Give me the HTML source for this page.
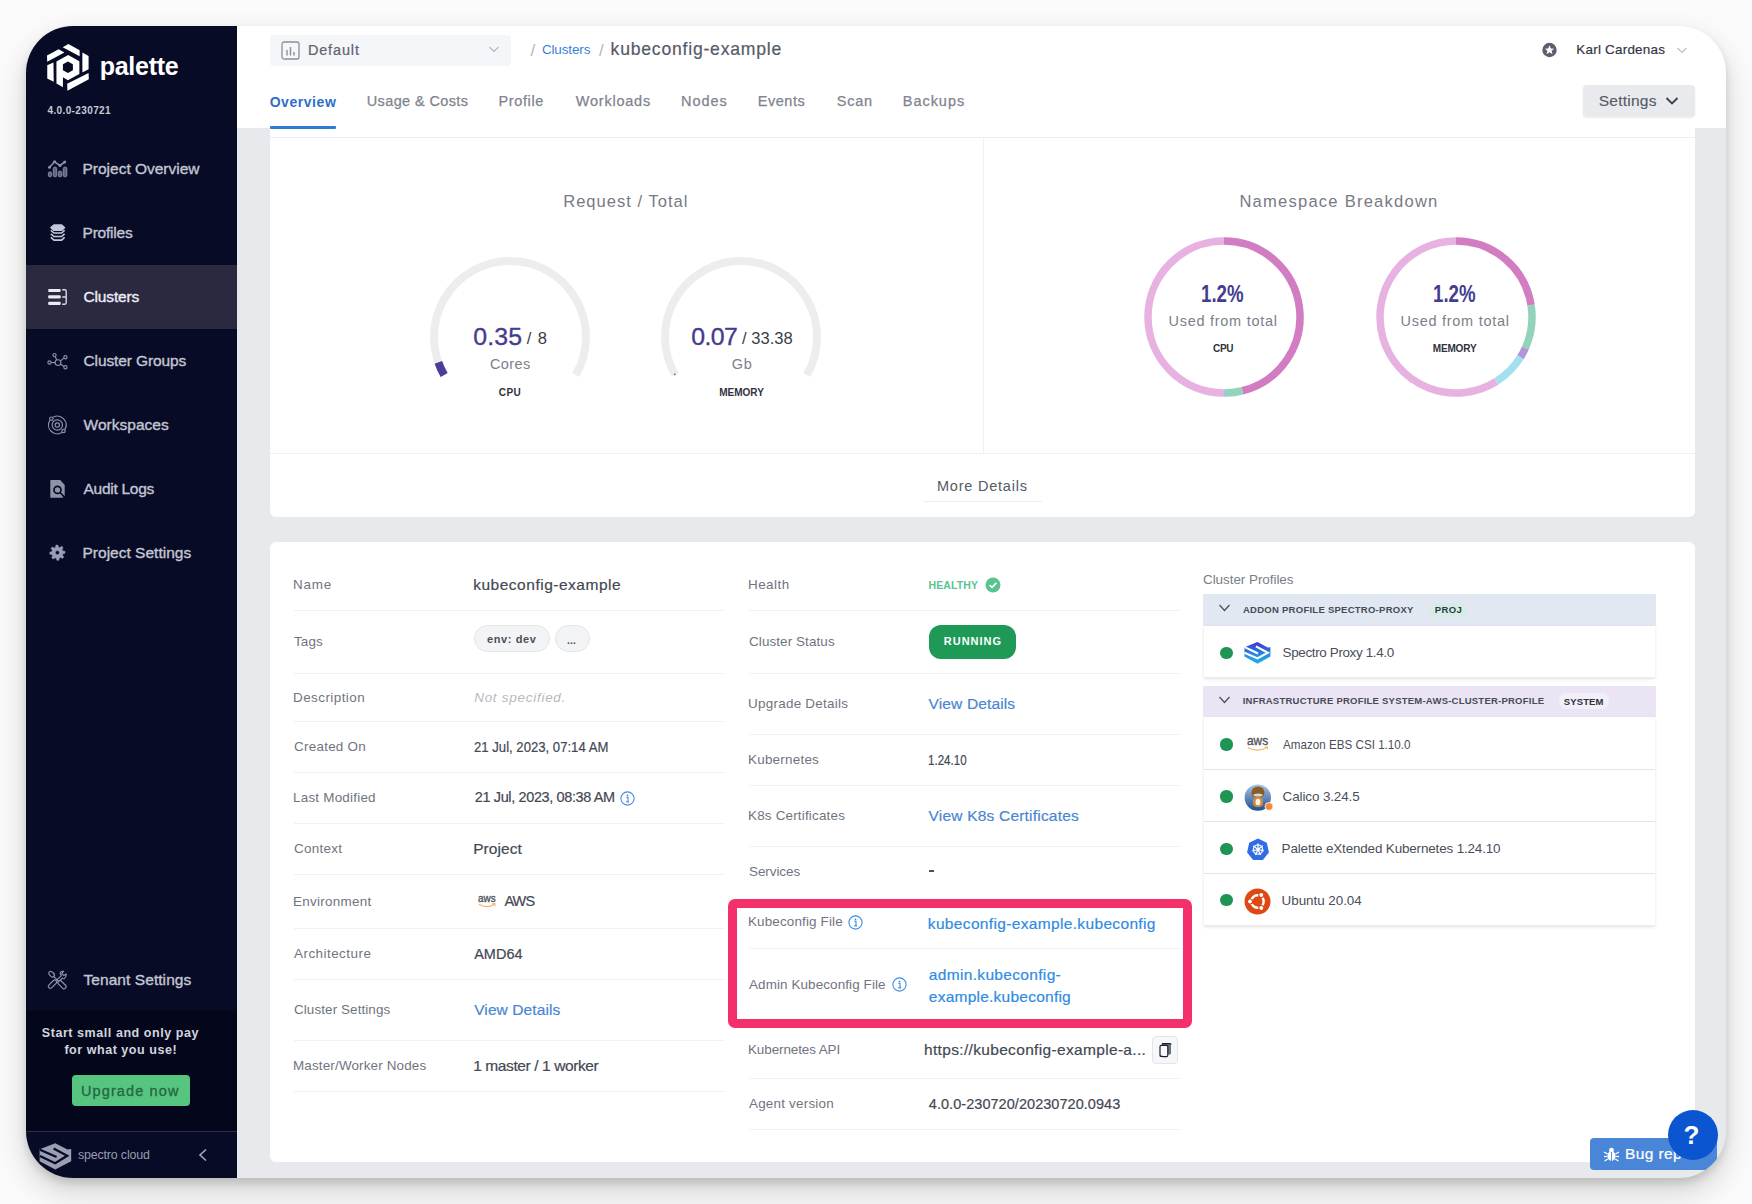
<!DOCTYPE html>
<html><head><meta charset="utf-8"><style>
html,body{margin:0;padding:0;}
body{width:1752px;height:1204px;position:relative;overflow:hidden;background:#fbfbfb;font-family:"Liberation Sans",sans-serif;}
svg{position:absolute;overflow:visible;}
</style></head><body>
<div style="position:absolute;left:26px;top:26px;width:1700px;height:1152px;border-radius:47px;background:#e8e9ec;box-shadow:0 14px 32px rgba(0,0,0,0.17),0 5px 8px rgba(0,0,0,0.13);overflow:hidden;"><div style="position:absolute;left:0;top:0;width:211px;height:1152px;background:#070b26;"></div><div style="position:absolute;left:0;top:239px;width:211px;height:64px;background:#2a2940;"></div><div style="position:absolute;left:0;top:985px;width:211px;height:120px;background:#04071c;"></div><div style="position:absolute;left:0;top:1105px;width:211px;height:1px;background:#2a2d45;"></div><div style="position:absolute;left:211px;top:0;width:1489px;height:102px;background:#ffffff;"></div><div style="position:absolute;left:1564px;top:1112px;width:127px;height:32px;background:#4a86d8;border-radius:4px;z-index:9;"></div><div style="position:absolute;left:1642px;top:1084px;width:50px;height:50px;border-radius:50%;background:#0b55d0;z-index:11;"></div></div>
<div style="position:absolute;left:270px;top:34.5px;width:241px;height:31.0px;background:#f4f6f9;border-radius:3px;"></div>
<div style="position:absolute;left:270px;top:126px;width:65.5px;height:2.5px;background:#2f7ad6;border-radius:1px;z-index:3;"></div>
<div style="position:absolute;left:270px;top:127px;width:1425px;height:390px;background:#ffffff;border-radius:0 0 6px 6px;"></div>
<div style="position:absolute;left:270px;top:137px;width:1425px;height:1px;background:#eceef1;"></div>
<div style="position:absolute;left:983px;top:138px;width:1px;height:315px;background:#eff0f2;"></div>
<div style="position:absolute;left:270px;top:453px;width:1425px;height:1px;background:#eef0f2;"></div>
<div style="position:absolute;left:923px;top:501px;width:119px;height:1px;background:#eceef0;"></div>
<div style="position:absolute;left:1583px;top:85px;width:112px;height:32px;background:#e9eaee;border-radius:4px;box-shadow:0 1px 2px rgba(0,0,0,0.08);"></div>
<div style="position:absolute;left:270px;top:542px;width:1425px;height:620px;background:#ffffff;border-radius:6px;"></div>
<div style="position:absolute;left:71.6px;top:1075.1px;width:118.20000000000002px;height:31.40000000000009px;background:#55c57f;border-radius:4px;"></div>
<div style="position:absolute;left:294px;top:610px;width:430px;height:1px;background:#f0f1f3;"></div>
<div style="position:absolute;left:294px;top:673px;width:430px;height:1px;background:#f0f1f3;"></div>
<div style="position:absolute;left:294px;top:721px;width:430px;height:1px;background:#f0f1f3;"></div>
<div style="position:absolute;left:294px;top:772px;width:430px;height:1px;background:#f0f1f3;"></div>
<div style="position:absolute;left:294px;top:823px;width:430px;height:1px;background:#f0f1f3;"></div>
<div style="position:absolute;left:294px;top:874px;width:430px;height:1px;background:#f0f1f3;"></div>
<div style="position:absolute;left:294px;top:928px;width:430px;height:1px;background:#f0f1f3;"></div>
<div style="position:absolute;left:294px;top:979px;width:430px;height:1px;background:#f0f1f3;"></div>
<div style="position:absolute;left:294px;top:1040px;width:430px;height:1px;background:#f0f1f3;"></div>
<div style="position:absolute;left:294px;top:1091px;width:430px;height:1px;background:#f0f1f3;"></div>
<div style="position:absolute;left:474px;top:625px;width:76px;height:27px;background:#f3f4f6;border:1px solid #e2e4e8;border-radius:14px;box-sizing:border-box;"></div>
<div style="position:absolute;left:555px;top:625px;width:35px;height:27px;background:#f3f4f6;border:1px solid #e2e4e8;border-radius:14px;box-sizing:border-box;"></div>
<div style="position:absolute;left:749px;top:610px;width:431px;height:1px;background:#f0f1f3;"></div>
<div style="position:absolute;left:749px;top:673px;width:431px;height:1px;background:#f0f1f3;"></div>
<div style="position:absolute;left:749px;top:734px;width:431px;height:1px;background:#f0f1f3;"></div>
<div style="position:absolute;left:749px;top:785px;width:431px;height:1px;background:#f0f1f3;"></div>
<div style="position:absolute;left:749px;top:846px;width:431px;height:1px;background:#f0f1f3;"></div>
<div style="position:absolute;left:749px;top:948px;width:431px;height:1px;background:#f0f1f3;"></div>
<div style="position:absolute;left:749px;top:1078px;width:431px;height:1px;background:#f0f1f3;"></div>
<div style="position:absolute;left:749px;top:1129px;width:431px;height:1px;background:#f0f1f3;"></div>
<div style="position:absolute;left:928.6px;top:625.3px;width:87.79999999999995px;height:33.30000000000007px;background:#1e9a56;border-radius:12px;"></div>
<div style="position:absolute;left:928.6px;top:870.4px;width:5.7999999999999545px;height:1.5px;background:#4a4e5a;"></div>
<div style="position:absolute;left:1152.3px;top:1036px;width:25.700000000000045px;height:27.59999999999991px;background:#f6f7f9;border:1px solid #e3e5e9;border-radius:4px;box-sizing:border-box;"></div>
<div style="position:absolute;left:727.7px;top:899.2px;width:464.0999999999999px;height:128.5px;border:9.5px solid #f3306a;border-radius:7px;box-sizing:border-box;z-index:8;"></div>
<div style="position:absolute;left:1203px;top:594px;width:453px;height:31.5px;background:#e2e8f1;"></div>
<div style="position:absolute;left:1204px;top:625.5px;width:451px;height:52.5px;background:#ffffff;box-shadow:0 1px 3px rgba(0,0,0,0.12);border-bottom:1.5px solid #e9eaee;box-sizing:border-box;"></div>
<div style="position:absolute;left:1429px;top:602.6px;width:37.700000000000045px;height:14.399999999999977px;background:#d5ede6;border-radius:7px;"></div>
<div style="position:absolute;left:1203px;top:686px;width:453px;height:31px;background:#ebe4f4;"></div>
<div style="position:absolute;left:1558.5px;top:693px;width:50.90000000000009px;height:16px;background:#f3eff9;border-radius:7px;"></div>
<div style="position:absolute;left:1204px;top:717px;width:451px;height:53px;background:#ffffff;box-shadow:0 1px 3px rgba(0,0,0,0.12);border-bottom:1.5px solid #e9eaee;box-sizing:border-box;"></div>
<div style="position:absolute;left:1204px;top:770px;width:451px;height:52px;background:#ffffff;box-shadow:0 1px 3px rgba(0,0,0,0.12);border-bottom:1.5px solid #e9eaee;box-sizing:border-box;"></div>
<div style="position:absolute;left:1204px;top:822px;width:451px;height:52px;background:#ffffff;box-shadow:0 1px 3px rgba(0,0,0,0.12);border-bottom:1.5px solid #e9eaee;box-sizing:border-box;"></div>
<div style="position:absolute;left:1204px;top:874px;width:451px;height:52px;background:#ffffff;box-shadow:0 1px 3px rgba(0,0,0,0.12);border-bottom:1.5px solid #e9eaee;box-sizing:border-box;"></div>
<div style="position:absolute;left:1220.4px;top:646.6px;width:12.2px;height:12.2px;border-radius:50%;background:#1f9555;z-index:6;"></div>
<div style="position:absolute;left:1220.4px;top:738.4px;width:12.2px;height:12.2px;border-radius:50%;background:#1f9555;z-index:6;"></div>
<div style="position:absolute;left:1220.4px;top:790.4px;width:12.2px;height:12.2px;border-radius:50%;background:#1f9555;z-index:6;"></div>
<div style="position:absolute;left:1220.4px;top:842.7px;width:12.2px;height:12.2px;border-radius:50%;background:#1f9555;z-index:6;"></div>
<div style="position:absolute;left:1220.4px;top:894.3px;width:12.2px;height:12.2px;border-radius:50%;background:#1f9555;z-index:6;"></div>
<svg style="left:40px;top:38px;z-index:6;" width="60" height="60" viewBox="0 0 1204 1204"><g fill="#ffffff"><polygon points="140,350 375,228 490,290 145,475"/><polygon points="455,185 570,120 795,245 795,365"/><polygon points="850,290 975,362 975,625 850,690"/><polygon points="545,920 975,700 980,830 550,1060"/><polygon points="145,545 270,490 275,880 145,815"/><path fill-rule="evenodd" d="M330,470 L565,340 L790,465 L790,720 L560,850 L460,790 L460,990 L330,915 Z M560,470 L660,525 L660,645 L560,700 L460,645 L460,525 Z"/></g></svg>
<svg style="left:44px;top:155px;z-index:6;" width="28" height="28" viewBox="0 0 28 28"><g fill="#5f6482" stroke="#8d91a9" stroke-width="0.9"><rect x="4.4" y="16.9" width="3.2" height="4.9" rx="1.4"/><rect x="9.3" y="12.1" width="3.4" height="9.7" rx="1.5"/><rect x="14.4" y="16.1" width="3.4" height="5.7" rx="1.5"/><rect x="19.3" y="12.1" width="3.5" height="9.7" rx="1.5"/></g><polyline points="5.5,12.2 10.6,6.8 16,10.5 20.7,7" fill="none" stroke="#8d91a9" stroke-width="1.6" stroke-linejoin="round" stroke-linecap="round"/><g fill="#8d91a9"><circle cx="5.5" cy="12.2" r="1.5"/><circle cx="10.6" cy="6.8" r="1.5"/><circle cx="16" cy="10.5" r="1.5"/><circle cx="20.7" cy="7" r="1.5"/></g></svg>
<svg style="left:44px;top:219px;z-index:6;" width="28" height="28" viewBox="0 0 28 28"><g stroke="#c4c7dc" stroke-width="1.6" fill="none" stroke-linejoin="round"><polygon points="7,8.6 10,6 17.6,6 20.4,8.6 17.6,11.3 10,11.3" fill="#c4c7dc"/><polyline points="6.8,11.4 10,14 17.6,14 20.6,11.4"/><polyline points="6.8,14.8 10,17.5 17.6,17.5 20.6,14.8"/><polyline points="6.8,18.3 10,21.1 17.6,21.1 20.6,18.3"/></g></svg>
<svg style="left:44px;top:283px;z-index:6;" width="28" height="28" viewBox="0 0 28 28"><g fill="#e9eaf3"><rect x="4.2" y="6" width="12.5" height="3.1" rx="1"/><rect x="4.2" y="12.3" width="12.5" height="3.2" rx="1"/><rect x="4.2" y="18.8" width="12.5" height="3.1" rx="1"/></g><path d="M18.2,6.8 H20.8 Q22.2,6.8 22.2,8.2 V19.8 Q22.2,21.2 20.8,21.2 H18.2 M18.2,14 H22.2" fill="none" stroke="#d6d8e6" stroke-width="1.4"/></svg>
<svg style="left:44px;top:347px;z-index:6;" width="28" height="28" viewBox="0 0 28 28"><g fill="none" stroke="#8d91a9" stroke-width="1.15"><circle cx="14" cy="15.6" r="2.9"/><circle cx="10.5" cy="8.1" r="1.6"/><circle cx="21.4" cy="10.2" r="1.6"/><circle cx="5.5" cy="15.5" r="1.6"/><circle cx="21.4" cy="20.2" r="1.6"/><line x1="11.2" y1="9.6" x2="12.7" y2="13"/><line x1="19.9" y1="11.1" x2="16.6" y2="13.9"/><line x1="7.1" y1="15.5" x2="11.1" y2="15.6"/><line x1="20" y1="19.3" x2="16.5" y2="17.2"/></g></svg>
<svg style="left:44px;top:411px;z-index:6;" width="28" height="28" viewBox="0 0 28 28"><g fill="none" stroke="#8d91a9" stroke-width="1.2"><path d="M9.17,6.23 A8.8,8.8 0 0 1 20.92,18.40"/><path d="M17.96,21.46 A8.8,8.8 0 0 1 5.84,9.34"/><circle cx="13.3" cy="14" r="5.2"/><circle cx="13.3" cy="14" r="2.2"/><circle cx="7.4" cy="7.7" r="1.7"/><circle cx="19.5" cy="20" r="1.7"/></g></svg>
<svg style="left:44px;top:475px;z-index:6;" width="28" height="28" viewBox="0 0 28 28"><path d="M6.8,5.1 H16.2 L20.7,9.9 V20.6 L18.6,22.8 H6.3 V5.6 Z" fill="#8f93a8"/><circle cx="13.5" cy="14.9" r="3.5" fill="none" stroke="#060a25" stroke-width="1.7"/><line x1="16" y1="17.5" x2="20.8" y2="22.3" stroke="#060a25" stroke-width="1.7"/></svg>
<svg style="left:44px;top:539px;z-index:6;" width="28" height="28" viewBox="0 0 28 28"><path fill-rule="evenodd" fill="#9a9eb6" stroke="#9a9eb6" stroke-width="0.6" stroke-linejoin="round" d="M20.85,12.19 L20.98,13.18 L20.99,14.17 L18.90,14.77 L18.71,15.48 L18.43,16.16 L19.73,17.90 L19.13,18.69 L18.43,19.40 L16.53,18.34 L15.90,18.71 L15.22,19.00 L14.91,21.15 L13.92,21.28 L12.93,21.29 L12.33,19.20 L11.62,19.01 L10.94,18.73 L9.20,20.03 L8.41,19.43 L7.70,18.73 L8.76,16.83 L8.39,16.20 L8.10,15.52 L5.95,15.21 L5.82,14.22 L5.81,13.23 L7.90,12.63 L8.09,11.92 L8.37,11.24 L7.07,9.50 L7.67,8.71 L8.37,8.00 L10.27,9.06 L10.90,8.69 L11.58,8.40 L11.89,6.25 L12.88,6.12 L13.87,6.11 L14.47,8.20 L15.18,8.39 L15.86,8.67 L17.60,7.37 L18.39,7.97 L19.10,8.67 L18.04,10.57 L18.41,11.20 L18.70,11.88 Z M15.5,13.7 A2.1,2.1 0 1 0 11.3,13.7 A2.1,2.1 0 1 0 15.5,13.7 Z"/></svg>
<svg style="left:44px;top:966px;z-index:6;" width="28" height="28" viewBox="0 0 28 28"><g fill="none" stroke="#8d91a9" stroke-width="1.2" stroke-linejoin="round"><ellipse cx="7.6" cy="8.2" rx="3.3" ry="2.1" transform="rotate(45 7.6 8.2)"/><line x1="10.1" y1="10.9" x2="14.6" y2="15.3"/><rect x="13.2" y="16.6" width="9.6" height="4.2" rx="1.6" transform="rotate(45 18 18.7)"/><rect x="3.6" y="16.3" width="9.8" height="3.8" rx="1.6" transform="rotate(-45 8.5 18.2)"/><path d="M12.2,14.4 L17.4,9.6 Q15.2,7.2 17.1,5.6 Q18.6,5 19.6,5.4 L17.8,7.6 L19.9,9.6 L22.2,8 Q22.8,10.6 20.6,12.4 Q19.2,13.2 18.3,12.2 L13.4,16.6"/></g></svg>
<svg style="left:30px;top:1135px;z-index:6;" width="50" height="40" viewBox="0 0 1505 1204"><polygon points="760,250 1130,440 1240,425 1240,790 760,1040 290,790 290,430" fill="#9b9eb2"/><g stroke="#060a25" stroke-width="68" fill="none" stroke-linejoin="miter"><line x1="300" y1="445" x2="800" y2="660"/><polyline points="710,410 1120,625 755,850 300,630"/></g></svg>
<svg style="left:196px;top:1147px;z-index:6;" width="14" height="16" viewBox="0 0 14 16"><polyline points="10,2.5 4,8 10,13.5" fill="none" stroke="#a7aabb" stroke-width="1.6"/></svg>
<svg style="left:281px;top:41px;z-index:6;" width="19" height="19" viewBox="0 0 19 19"><rect x="1" y="1" width="17" height="17" rx="2" fill="none" stroke="#8a8f99" stroke-width="1.3"/><g stroke="#8a8f99" stroke-width="1.4"><line x1="6" y1="9" x2="6" y2="14.5"/><line x1="9.5" y1="6" x2="9.5" y2="14.5"/><line x1="13" y1="11" x2="13" y2="14.5"/></g></svg>
<svg style="left:488px;top:44px;z-index:6;" width="12" height="10" viewBox="0 0 12 10"><polyline points="1.5,3 6,7.5 10.5,3" fill="none" stroke="#b3b7bf" stroke-width="1.1"/></svg>
<svg style="left:1541px;top:42px;z-index:6;" width="17" height="16" viewBox="0 0 17 16"><circle cx="8.5" cy="8" r="7.2" fill="#5d5d70"/><polygon fill="#ffffff" points="8.5,3.3 9.8,6.6 13.2,6.7 10.6,8.8 11.5,12.2 8.5,10.3 5.5,12.2 6.4,8.8 3.8,6.7 7.2,6.6"/></svg>
<svg style="left:1676px;top:45px;z-index:6;" width="12" height="10" viewBox="0 0 12 10"><polyline points="1.5,3 6,7.5 10.5,3" fill="none" stroke="#b9bcc4" stroke-width="1.1"/></svg>
<svg style="left:1664px;top:94px;z-index:6;" width="16" height="14" viewBox="0 0 16 14"><polyline points="2.5,4 8,9.5 13.5,4" fill="none" stroke="#3d414c" stroke-width="1.9"/></svg>
<svg style="left:620px;top:790.5px;z-index:6;" width="15" height="15" viewBox="0 0 15 15"><circle cx="7.5" cy="7.5" r="6.6" fill="none" stroke="#4a8ad8" stroke-width="1.1"/><circle cx="7.5" cy="4.4" r="0.9" fill="#4a8ad8"/><path d="M6.3,6.3 H8 V10.8 M6.2,10.9 H9" fill="none" stroke="#4a8ad8" stroke-width="1.1"/></svg>
<svg style="left:847.5px;top:914.5px;z-index:6;" width="15" height="15" viewBox="0 0 15 15"><circle cx="7.5" cy="7.5" r="6.6" fill="none" stroke="#3b8ee0" stroke-width="1.1"/><circle cx="7.5" cy="4.4" r="0.9" fill="#3b8ee0"/><path d="M6.3,6.3 H8 V10.8 M6.2,10.9 H9" fill="none" stroke="#3b8ee0" stroke-width="1.1"/></svg>
<svg style="left:891.6px;top:976.8px;z-index:6;" width="15" height="15" viewBox="0 0 15 15"><circle cx="7.5" cy="7.5" r="6.6" fill="none" stroke="#3b8ee0" stroke-width="1.1"/><circle cx="7.5" cy="4.4" r="0.9" fill="#3b8ee0"/><path d="M6.3,6.3 H8 V10.8 M6.2,10.9 H9" fill="none" stroke="#3b8ee0" stroke-width="1.1"/></svg>
<svg style="left:985px;top:577px;z-index:6;" width="16" height="16" viewBox="0 0 16 16"><circle cx="8" cy="8" r="7.5" fill="#5ac48f"/><polyline points="4.6,8.2 7,10.4 11.4,5.8" fill="none" stroke="#fff" stroke-width="1.7"/></svg>
<svg style="left:477px;top:893.6px;z-index:6;" width="21.7" height="15.799999999999955" viewBox="0 0 21.7 15.799999999999955"><text x="1" y="8.00" font-family="Liberation Sans" font-size="11.56" fill="#4f5259" textLength="17.70" lengthAdjust="spacingAndGlyphs" stroke="#4f5259" stroke-width="0.35">aws</text><path d="M1.8,10.20 Q9.85,15.00 17.20,10.20" fill="none" stroke="#f1b46a" stroke-width="1.2"/><path d="M15.10,9.80 L18.30,9.60 L17.70,12.20" fill="none" stroke="#f2a84e" stroke-width="0.9"/></svg>
<svg style="left:1245.7px;top:736px;z-index:6;" width="25.2" height="17.700000000000045" viewBox="0 0 25.2 17.700000000000045"><text x="1" y="9.00" font-family="Liberation Sans" font-size="13.49" fill="#4f5259" textLength="21.20" lengthAdjust="spacingAndGlyphs" stroke="#4f5259" stroke-width="0.35">aws</text><path d="M1.8,11.50 Q11.60,16.90 20.70,11.50" fill="none" stroke="#f1b46a" stroke-width="1.2"/><path d="M18.60,11.10 L21.80,10.90 L21.20,13.50" fill="none" stroke="#f2a84e" stroke-width="0.9"/></svg>
<svg style="left:1157px;top:1041px;z-index:6;" width="16" height="18" viewBox="0 0 16 18"><rect x="4.6" y="2.3" width="9.4" height="11.2" rx="1.2" fill="#6e727d"/><path d="M5,2.6 H13.2 Q14,2.6 14,3.6" fill="none" stroke="#1c2030" stroke-width="1.2"/><rect x="3" y="4.3" width="7.8" height="11.2" rx="1.3" fill="#f7f8fa" stroke="#1c2030" stroke-width="1.2"/><path d="M3.6,14.8 Q4.5,15.6 6,15.6 H10" fill="none" stroke="#1c2030" stroke-width="1.4"/></svg>
<svg style="left:1218px;top:603px;z-index:6;" width="13" height="10" viewBox="0 0 13 10"><polyline points="1.5,2 6.5,7.5 11.5,2" fill="none" stroke="#4a4e5a" stroke-width="1.2"/></svg>
<svg style="left:1218px;top:695px;z-index:6;" width="13" height="10" viewBox="0 0 13 10"><polyline points="1.5,2 6.5,7.5 11.5,2" fill="none" stroke="#4a4e5a" stroke-width="1.2"/></svg>
<svg style="left:1240px;top:638px;z-index:6;" width="36" height="30" viewBox="0 0 1445 1204"><defs><linearGradient id="sp" x1="0" y1="0" x2="0" y2="1"><stop offset="0" stop-color="#4030d0"/><stop offset="0.5" stop-color="#2a7fe0"/><stop offset="1" stop-color="#1db6e6"/></linearGradient></defs><polygon points="700,160 1110,385 1220,370 1220,740 700,1030 180,740 180,370" fill="url(#sp)"/><g stroke="#ffffff" stroke-width="85" fill="none"><line x1="190" y1="365" x2="720" y2="620"/><polyline points="640,335 1120,590 700,820 180,590"/></g></svg>
<svg style="left:1243.5px;top:782.5px;z-index:6;" width="30" height="29" viewBox="0 0 30 29"><defs><linearGradient id="cb" x1="0" y1="0" x2="0" y2="1"><stop offset="0" stop-color="#a9c4e4"/><stop offset="1" stop-color="#1f4f8f"/></linearGradient></defs><circle cx="13.8" cy="14.6" r="13.2" fill="url(#cb)"/><ellipse cx="14" cy="9.5" rx="6.5" ry="6" fill="#8a5a2a"/><ellipse cx="14" cy="12" rx="4.6" ry="1.6" fill="#d8d8c8"/><rect x="9" y="14" width="10" height="10" rx="4" fill="#d08a45"/><ellipse cx="14" cy="19" rx="2.4" ry="3.3" fill="#fff6e0"/><circle cx="25" cy="23.5" r="4" fill="#f08a3a" stroke="#fff" stroke-width="0.8"/></svg>
<svg style="left:1245.5px;top:837.5px;z-index:6;" width="24" height="23" viewBox="0 0 24 24"><polygon points="12,0.6 21.2,5 23.4,15 17,23 7,23 0.6,15 2.8,5" fill="#326ce5"/><g stroke="#ffffff" stroke-width="1.3" fill="none"><circle cx="12" cy="12" r="4.8"/><line x1="12" y1="12" x2="12.00" y2="5.80"/><line x1="12" y1="12" x2="16.85" y2="8.13"/><line x1="12" y1="12" x2="18.04" y2="13.38"/><line x1="12" y1="12" x2="14.69" y2="17.59"/><line x1="12" y1="12" x2="9.31" y2="17.59"/><line x1="12" y1="12" x2="5.96" y2="13.38"/><line x1="12" y1="12" x2="7.15" y2="8.13"/></g><circle cx="12" cy="12" r="1.5" fill="#fff"/></svg>
<svg style="left:1244px;top:887.5px;z-index:6;" width="27" height="27" viewBox="0 0 27 27"><circle cx="13.5" cy="13.5" r="13" fill="#dd4814"/><circle cx="13.5" cy="13.5" r="6.2" fill="none" stroke="#ffffff" stroke-width="2.4"/><g fill="#dd4814"><circle cx="7" cy="13.5" r="2.6"/><circle cx="16.7" cy="7.9" r="2.6"/><circle cx="16.7" cy="19.1" r="2.6"/></g><g fill="#ffffff"><circle cx="6" cy="13.5" r="1.9"/><circle cx="17.3" cy="7" r="1.9"/><circle cx="17.3" cy="20" r="1.9"/></g></svg>
<svg style="left:1603px;top:1146px;z-index:10;" width="17" height="17" viewBox="0 0 17 17"><g fill="#ffffff"><ellipse cx="8.5" cy="10" rx="4" ry="5"/><circle cx="8.5" cy="4.2" r="2.4"/></g><g stroke="#ffffff" stroke-width="1.3"><line x1="1" y1="6" x2="4.6" y2="8"/><line x1="16" y1="6" x2="12.4" y2="8"/><line x1="1" y1="10.5" x2="4.5" y2="10.5"/><line x1="16" y1="10.5" x2="12.5" y2="10.5"/><line x1="1.5" y1="15" x2="4.8" y2="13"/><line x1="15.5" y1="15" x2="12.2" y2="13"/></g><line x1="8.5" y1="6" x2="8.5" y2="15" stroke="#4a86d8" stroke-width="0.9"/></svg>
<svg style="left:429.5px;top:257px;z-index:6;" width="160" height="160" viewBox="0 0 160 160"><path d="M14.18,118.00 A76,76 0 1 1 145.82,118.00" fill="none" stroke="#ededf0" stroke-width="8"/><path d="M14.18,118.00 A76,76 0 0 1 8.36,105.37" fill="none" stroke="#4a3f96" stroke-width="8"/></svg>
<svg style="left:661px;top:257px;z-index:6;" width="160" height="160" viewBox="0 0 160 160"><path d="M14.18,118.00 A76,76 0 1 1 145.82,118.00" fill="none" stroke="#ededf0" stroke-width="8"/><path d="M14.18,118.00 A76,76 0 0 1 13.40,116.61" fill="none" stroke="#4a3f96" stroke-width="1.2"/></svg>
<svg style="left:1144px;top:237px;z-index:6;" width="160" height="160" viewBox="0 0 160 160"><path d="M80.00,4.00 A76,76 0 0 1 98.39,153.74" fill="none" stroke="#d27cc2" stroke-width="7.5"/><path d="M98.39,153.74 A76,76 0 0 1 81.99,155.97" fill="none" stroke="#92d3b9" stroke-width="7.5"/><path d="M81.99,155.97 A76,76 0 0 1 80.00,156.00" fill="none" stroke="#9fc6e8" stroke-width="7.5"/><path d="M80.00,156.00 A76,76 0 0 1 80.00,4.00" fill="none" stroke="#e7b2e2" stroke-width="7.5"/></svg>
<svg style="left:1375.5px;top:237px;z-index:6;" width="160" height="160" viewBox="0 0 160 160"><path d="M80.00,4.00 A76,76 0 0 1 155.06,68.11" fill="none" stroke="#d27cc2" stroke-width="7.5"/><path d="M155.06,68.11 A76,76 0 0 1 149.43,110.91" fill="none" stroke="#92d3b9" stroke-width="7.5"/><path d="M149.43,110.91 A76,76 0 0 1 144.45,120.27" fill="none" stroke="#b595da" stroke-width="7.5"/><path d="M144.45,120.27 A76,76 0 0 1 120.27,144.45" fill="none" stroke="#a3e0ef" stroke-width="7.5"/><path d="M120.27,144.45 A76,76 0 1 1 80.00,4.00" fill="none" stroke="#e7b2e2" stroke-width="7.5"/></svg>
<div style="position:absolute;left:99.75px;top:53.79px;font-size:25px;line-height:25px;color:#ffffff;white-space:nowrap;z-index:5;font-weight:700;letter-spacing:-0.279px;">palette</div>
<div style="position:absolute;left:47.50px;top:106.11px;font-size:10px;line-height:10px;color:#c9ccd6;white-space:nowrap;z-index:5;font-weight:700;letter-spacing:0.375px;">4.0.0-230721</div>
<div style="position:absolute;left:82.50px;top:161.42px;font-size:15.52px;line-height:15.52px;color:#c3c6d3;white-space:nowrap;z-index:5;letter-spacing:-0.017px;-webkit-text-stroke:0.35px #c3c6d3;">Project Overview</div>
<div style="position:absolute;left:82.50px;top:225.42px;font-size:15.52px;line-height:15.52px;color:#c3c6d3;white-space:nowrap;z-index:5;letter-spacing:-0.211px;-webkit-text-stroke:0.35px #c3c6d3;">Profiles</div>
<div style="position:absolute;left:83.50px;top:289.42px;font-size:15.52px;line-height:15.52px;color:#eceef5;white-space:nowrap;z-index:5;letter-spacing:-0.149px;-webkit-text-stroke:0.35px #eceef5;">Clusters</div>
<div style="position:absolute;left:83.50px;top:353.42px;font-size:15.52px;line-height:15.52px;color:#c3c6d3;white-space:nowrap;z-index:5;letter-spacing:-0.114px;-webkit-text-stroke:0.35px #c3c6d3;">Cluster Groups</div>
<div style="position:absolute;left:83.50px;top:417.42px;font-size:15.52px;line-height:15.52px;color:#c3c6d3;white-space:nowrap;z-index:5;letter-spacing:0.020px;-webkit-text-stroke:0.35px #c3c6d3;">Workspaces</div>
<div style="position:absolute;left:83.50px;top:481.42px;font-size:15.52px;line-height:15.52px;color:#c3c6d3;white-space:nowrap;z-index:5;letter-spacing:-0.285px;-webkit-text-stroke:0.35px #c3c6d3;">Audit Logs</div>
<div style="position:absolute;left:82.50px;top:545.42px;font-size:15.52px;line-height:15.52px;color:#c3c6d3;white-space:nowrap;z-index:5;-webkit-text-stroke:0.35px #c3c6d3;">Project Settings</div>
<div style="position:absolute;left:83.50px;top:972.42px;font-size:15.52px;line-height:15.52px;color:#c3c6d3;white-space:nowrap;z-index:5;letter-spacing:0.057px;-webkit-text-stroke:0.35px #c3c6d3;">Tenant Settings</div>
<div style="position:absolute;left:41.80px;top:1026.59px;font-size:12.5px;line-height:12.5px;color:#d3d5de;white-space:nowrap;z-index:5;font-weight:700;letter-spacing:0.559px;">Start small and only pay</div>
<div style="position:absolute;left:64.40px;top:1044.19px;font-size:12.5px;line-height:12.5px;color:#d3d5de;white-space:nowrap;z-index:5;font-weight:700;letter-spacing:0.543px;">for what you use!</div>
<div style="position:absolute;left:80.90px;top:1083.62px;font-size:14.49px;line-height:14.49px;color:#276642;white-space:nowrap;z-index:5;letter-spacing:1.140px;-webkit-text-stroke:0.3px #276642;">Upgrade now</div>
<div style="position:absolute;left:78.00px;top:1148.93px;font-size:12.42px;line-height:12.42px;color:#9a9cae;white-space:nowrap;z-index:5;letter-spacing:-0.157px;">spectro cloud</div>
<div style="position:absolute;left:307.90px;top:42.92px;font-size:14.49px;line-height:14.49px;color:#5f636d;white-space:nowrap;z-index:5;letter-spacing:0.855px;-webkit-text-stroke:0.2px #5f636d;">Default</div>
<div style="position:absolute;left:530.50px;top:41.70px;font-size:17px;line-height:17px;color:#b3b7bf;white-space:nowrap;z-index:5;">/</div>
<div style="position:absolute;left:541.90px;top:43.43px;font-size:13.45px;line-height:13.45px;color:#3b82d6;white-space:nowrap;z-index:5;letter-spacing:-0.109px;">Clusters</div>
<div style="position:absolute;left:599.00px;top:41.70px;font-size:17px;line-height:17px;color:#b3b7bf;white-space:nowrap;z-index:5;">/</div>
<div style="position:absolute;left:610.60px;top:41.41px;font-size:17.59px;line-height:17.59px;color:#555a68;white-space:nowrap;z-index:5;letter-spacing:0.786px;-webkit-text-stroke:0.2px #555a68;">kubeconfig-example</div>
<div style="position:absolute;left:269.70px;top:94.56px;font-size:14px;line-height:14px;color:#2d6fc7;white-space:nowrap;z-index:5;font-weight:700;letter-spacing:0.547px;">Overview</div>
<div style="position:absolute;left:366.70px;top:94.32px;font-size:14.49px;line-height:14.49px;color:#80848f;white-space:nowrap;z-index:5;letter-spacing:0.395px;-webkit-text-stroke:0.25px #80848f;">Usage &amp; Costs</div>
<div style="position:absolute;left:498.60px;top:94.32px;font-size:14.49px;line-height:14.49px;color:#80848f;white-space:nowrap;z-index:5;letter-spacing:0.600px;-webkit-text-stroke:0.25px #80848f;">Profile</div>
<div style="position:absolute;left:575.80px;top:94.32px;font-size:14.49px;line-height:14.49px;color:#80848f;white-space:nowrap;z-index:5;letter-spacing:0.773px;-webkit-text-stroke:0.25px #80848f;">Workloads</div>
<div style="position:absolute;left:681.10px;top:94.32px;font-size:14.49px;line-height:14.49px;color:#80848f;white-space:nowrap;z-index:5;letter-spacing:0.943px;-webkit-text-stroke:0.25px #80848f;">Nodes</div>
<div style="position:absolute;left:757.80px;top:94.32px;font-size:14.49px;line-height:14.49px;color:#80848f;white-space:nowrap;z-index:5;letter-spacing:0.532px;-webkit-text-stroke:0.25px #80848f;">Events</div>
<div style="position:absolute;left:836.70px;top:94.32px;font-size:14.49px;line-height:14.49px;color:#80848f;white-space:nowrap;z-index:5;letter-spacing:0.780px;-webkit-text-stroke:0.25px #80848f;">Scan</div>
<div style="position:absolute;left:902.80px;top:94.32px;font-size:14.49px;line-height:14.49px;color:#80848f;white-space:nowrap;z-index:5;letter-spacing:0.965px;-webkit-text-stroke:0.25px #80848f;">Backups</div>
<div style="position:absolute;left:1576.30px;top:43.03px;font-size:13.45px;line-height:13.45px;color:#333744;white-space:nowrap;z-index:5;letter-spacing:0.227px;-webkit-text-stroke:0.2px #333744;">Karl Cardenas</div>
<div style="position:absolute;left:1598.70px;top:93.42px;font-size:15.52px;line-height:15.52px;color:#555a66;white-space:nowrap;z-index:5;letter-spacing:0.242px;-webkit-text-stroke:0.15px #555a66;">Settings</div>
<div style="position:absolute;left:563.20px;top:193.61px;font-size:16.56px;line-height:16.56px;color:#777a85;white-space:nowrap;z-index:5;letter-spacing:1.015px;">Request / Total</div>
<div style="position:absolute;left:1239.40px;top:193.61px;font-size:16.56px;line-height:16.56px;color:#777a85;white-space:nowrap;z-index:5;letter-spacing:1.235px;">Namespace Breakdown</div>
<div style="position:absolute;left:473.30px;top:324.87px;font-size:24.84px;line-height:24.84px;color:#433c8f;white-space:nowrap;z-index:5;letter-spacing:0.162px;-webkit-text-stroke:0.35px #433c8f;">0.35</div>
<div style="position:absolute;left:526.70px;top:330.91px;font-size:16.56px;line-height:16.56px;color:#3a3d48;white-space:nowrap;z-index:5;letter-spacing:0.903px;">/ 8</div>
<div style="position:absolute;left:490.00px;top:356.92px;font-size:14.49px;line-height:14.49px;color:#7d808a;white-space:nowrap;z-index:5;letter-spacing:0.401px;">Cores</div>
<div style="position:absolute;left:498.75px;top:387.62px;font-size:10px;line-height:10px;color:#2f323c;white-space:nowrap;z-index:5;font-weight:700;letter-spacing:0.404px;">CPU</div>
<div style="position:absolute;left:691.25px;top:324.87px;font-size:24.84px;line-height:24.84px;color:#433c8f;white-space:nowrap;z-index:5;letter-spacing:-0.572px;-webkit-text-stroke:0.35px #433c8f;">0.07</div>
<div style="position:absolute;left:742.00px;top:330.91px;font-size:16.56px;line-height:16.56px;color:#3a3d48;white-space:nowrap;z-index:5;letter-spacing:0.017px;">/ 33.38</div>
<div style="position:absolute;left:731.70px;top:356.92px;font-size:14.49px;line-height:14.49px;color:#7d808a;white-space:nowrap;z-index:5;letter-spacing:0.734px;">Gb</div>
<div style="position:absolute;left:719.20px;top:387.62px;font-size:10px;line-height:10px;color:#2f323c;white-space:nowrap;z-index:5;font-weight:700;">MEMORY</div>
<div style="position:absolute;left:1201.42px;top:281.68px;font-size:24px;line-height:24px;color:#433c8f;white-space:nowrap;z-index:5;font-weight:700;transform:scaleX(0.7777);transform-origin:0 0;">1.2%</div>
<div style="position:absolute;left:1168.60px;top:313.92px;font-size:14.49px;line-height:14.49px;color:#7d808a;white-space:nowrap;z-index:5;letter-spacing:0.722px;">Used from total</div>
<div style="position:absolute;left:1213.00px;top:344.22px;font-size:10px;line-height:10px;color:#2f323c;white-space:nowrap;z-index:5;font-weight:700;letter-spacing:-0.346px;">CPU</div>
<div style="position:absolute;left:1433.42px;top:281.68px;font-size:24px;line-height:24px;color:#433c8f;white-space:nowrap;z-index:5;font-weight:700;transform:scaleX(0.7777);transform-origin:0 0;">1.2%</div>
<div style="position:absolute;left:1400.60px;top:313.92px;font-size:14.49px;line-height:14.49px;color:#7d808a;white-space:nowrap;z-index:5;letter-spacing:0.722px;">Used from total</div>
<div style="position:absolute;left:1432.70px;top:344.22px;font-size:10px;line-height:10px;color:#2f323c;white-space:nowrap;z-index:5;font-weight:700;letter-spacing:-0.132px;">MEMORY</div>
<div style="position:absolute;left:937.00px;top:478.92px;font-size:14.49px;line-height:14.49px;color:#555a66;white-space:nowrap;z-index:5;letter-spacing:0.786px;">More Details</div>
<div style="position:absolute;left:293.00px;top:578.13px;font-size:13.45px;line-height:13.45px;color:#70747f;white-space:nowrap;z-index:5;letter-spacing:0.776px;">Name</div>
<div style="position:absolute;left:294.00px;top:634.73px;font-size:13.45px;line-height:13.45px;color:#70747f;white-space:nowrap;z-index:5;letter-spacing:0.112px;">Tags</div>
<div style="position:absolute;left:293.00px;top:690.93px;font-size:13.45px;line-height:13.45px;color:#70747f;white-space:nowrap;z-index:5;letter-spacing:0.446px;">Description</div>
<div style="position:absolute;left:294.00px;top:740.23px;font-size:13.45px;line-height:13.45px;color:#70747f;white-space:nowrap;z-index:5;letter-spacing:0.257px;">Created On</div>
<div style="position:absolute;left:293.00px;top:790.93px;font-size:13.45px;line-height:13.45px;color:#70747f;white-space:nowrap;z-index:5;letter-spacing:0.221px;">Last Modified</div>
<div style="position:absolute;left:294.00px;top:842.23px;font-size:13.45px;line-height:13.45px;color:#70747f;white-space:nowrap;z-index:5;letter-spacing:0.287px;">Context</div>
<div style="position:absolute;left:293.00px;top:894.93px;font-size:13.45px;line-height:13.45px;color:#70747f;white-space:nowrap;z-index:5;letter-spacing:0.270px;">Environment</div>
<div style="position:absolute;left:294.00px;top:947.03px;font-size:13.45px;line-height:13.45px;color:#70747f;white-space:nowrap;z-index:5;letter-spacing:0.471px;">Architecture</div>
<div style="position:absolute;left:294.00px;top:1003.13px;font-size:13.45px;line-height:13.45px;color:#70747f;white-space:nowrap;z-index:5;letter-spacing:0.091px;">Cluster Settings</div>
<div style="position:absolute;left:293.00px;top:1059.03px;font-size:13.45px;line-height:13.45px;color:#70747f;white-space:nowrap;z-index:5;letter-spacing:0.155px;">Master/Worker Nodes</div>
<div style="position:absolute;left:473.20px;top:577.12px;font-size:15.52px;line-height:15.52px;color:#444853;white-space:nowrap;z-index:5;letter-spacing:0.504px;-webkit-text-stroke:0.2px #444853;">kubeconfig-example</div>
<div style="position:absolute;left:487.00px;top:633.63px;font-size:11px;line-height:11px;color:#4a4e5a;white-space:nowrap;z-index:5;font-weight:700;letter-spacing:0.613px;">env: dev</div>
<div style="position:absolute;left:567.00px;top:636.12px;font-size:10px;line-height:10px;color:#4a4e5a;white-space:nowrap;z-index:5;font-weight:700;letter-spacing:0.222px;">...</div>
<div style="position:absolute;left:474.20px;top:690.93px;font-size:13.45px;line-height:13.45px;color:#b7b9c0;white-space:nowrap;z-index:5;font-style:italic;letter-spacing:0.748px;">Not specified.</div>
<div style="position:absolute;left:474.20px;top:739.72px;font-size:14.49px;line-height:14.49px;color:#444853;white-space:nowrap;z-index:5;transform:scaleX(0.9067);transform-origin:0 0;-webkit-text-stroke:0.2px #444853;">21 Jul, 2023, 07:14 AM</div>
<div style="position:absolute;left:474.80px;top:790.42px;font-size:14.49px;line-height:14.49px;color:#444853;white-space:nowrap;z-index:5;letter-spacing:-0.372px;-webkit-text-stroke:0.2px #444853;">21 Jul, 2023, 08:38 AM</div>
<div style="position:absolute;left:473.20px;top:841.22px;font-size:15.52px;line-height:15.52px;color:#444853;white-space:nowrap;z-index:5;letter-spacing:0.054px;-webkit-text-stroke:0.2px #444853;">Project</div>
<div style="position:absolute;left:504.40px;top:894.42px;font-size:14.49px;line-height:14.49px;color:#444853;white-space:nowrap;z-index:5;letter-spacing:-0.897px;-webkit-text-stroke:0.2px #444853;">AWS</div>
<div style="position:absolute;left:474.20px;top:946.52px;font-size:14.49px;line-height:14.49px;color:#444853;white-space:nowrap;z-index:5;letter-spacing:0.014px;-webkit-text-stroke:0.2px #444853;">AMD64</div>
<div style="position:absolute;left:474.20px;top:1002.12px;font-size:15.52px;line-height:15.52px;color:#4a86d0;white-space:nowrap;z-index:5;letter-spacing:0.088px;-webkit-text-stroke:0.2px #4a86d0;">View Details</div>
<div style="position:absolute;left:473.20px;top:1058.02px;font-size:15.52px;line-height:15.52px;color:#444853;white-space:nowrap;z-index:5;letter-spacing:-0.407px;-webkit-text-stroke:0.2px #444853;">1 master / 1 worker</div>
<div style="position:absolute;left:748.00px;top:578.13px;font-size:13.45px;line-height:13.45px;color:#70747f;white-space:nowrap;z-index:5;letter-spacing:0.466px;">Health</div>
<div style="position:absolute;left:749.00px;top:634.73px;font-size:13.45px;line-height:13.45px;color:#70747f;white-space:nowrap;z-index:5;letter-spacing:0.094px;">Cluster Status</div>
<div style="position:absolute;left:748.00px;top:697.43px;font-size:13.45px;line-height:13.45px;color:#70747f;white-space:nowrap;z-index:5;letter-spacing:0.262px;">Upgrade Details</div>
<div style="position:absolute;left:748.00px;top:753.43px;font-size:13.45px;line-height:13.45px;color:#70747f;white-space:nowrap;z-index:5;letter-spacing:0.232px;">Kubernetes</div>
<div style="position:absolute;left:748.00px;top:809.13px;font-size:13.45px;line-height:13.45px;color:#70747f;white-space:nowrap;z-index:5;letter-spacing:0.188px;">K8s Certificates</div>
<div style="position:absolute;left:749.00px;top:864.63px;font-size:13.45px;line-height:13.45px;color:#70747f;white-space:nowrap;z-index:5;letter-spacing:-0.058px;">Services</div>
<div style="position:absolute;left:748.00px;top:915.43px;font-size:13.45px;line-height:13.45px;color:#70747f;white-space:nowrap;z-index:5;letter-spacing:0.146px;">Kubeconfig File</div>
<div style="position:absolute;left:749.00px;top:977.73px;font-size:13.45px;line-height:13.45px;color:#70747f;white-space:nowrap;z-index:5;letter-spacing:0.106px;">Admin Kubeconfig File</div>
<div style="position:absolute;left:748.00px;top:1043.23px;font-size:13.45px;line-height:13.45px;color:#70747f;white-space:nowrap;z-index:5;letter-spacing:-0.091px;">Kubernetes API</div>
<div style="position:absolute;left:749.00px;top:1097.13px;font-size:13.45px;line-height:13.45px;color:#70747f;white-space:nowrap;z-index:5;letter-spacing:0.209px;">Agent version</div>
<div style="position:absolute;left:928.60px;top:579.57px;font-size:10.5px;line-height:10.5px;color:#5cc393;white-space:nowrap;z-index:5;font-weight:700;letter-spacing:0.083px;">HEALTHY</div>
<div style="position:absolute;left:943.80px;top:636.13px;font-size:11px;line-height:11px;color:#ffffff;white-space:nowrap;z-index:5;font-weight:700;letter-spacing:0.987px;">RUNNING</div>
<div style="position:absolute;left:928.60px;top:696.42px;font-size:15.52px;line-height:15.52px;color:#4a86d0;white-space:nowrap;z-index:5;letter-spacing:0.125px;-webkit-text-stroke:0.2px #4a86d0;">View Details</div>
<div style="position:absolute;left:927.80px;top:752.92px;font-size:14.49px;line-height:14.49px;color:#444853;white-space:nowrap;z-index:5;transform:scaleX(0.7997);transform-origin:0 0;-webkit-text-stroke:0.2px #444853;">1.24.10</div>
<div style="position:absolute;left:928.60px;top:808.12px;font-size:15.52px;line-height:15.52px;color:#4a86d0;white-space:nowrap;z-index:5;letter-spacing:0.193px;-webkit-text-stroke:0.2px #4a86d0;">View K8s Certificates</div>
<div style="position:absolute;left:927.80px;top:916.02px;font-size:15.52px;line-height:15.52px;color:#2f8be3;white-space:nowrap;z-index:5;letter-spacing:0.336px;-webkit-text-stroke:0.2px #2f8be3;">kubeconfig-example.kubeconfig</div>
<div style="position:absolute;left:928.80px;top:966.92px;font-size:15.52px;line-height:15.52px;color:#2f8be3;white-space:nowrap;z-index:5;letter-spacing:0.324px;-webkit-text-stroke:0.2px #2f8be3;">admin.kubeconfig-</div>
<div style="position:absolute;left:928.80px;top:988.72px;font-size:15.52px;line-height:15.52px;color:#2f8be3;white-space:nowrap;z-index:5;letter-spacing:0.231px;-webkit-text-stroke:0.2px #2f8be3;">example.kubeconfig</div>
<div style="position:absolute;left:924.00px;top:1042.22px;font-size:15.52px;line-height:15.52px;color:#444853;white-space:nowrap;z-index:5;letter-spacing:0.325px;-webkit-text-stroke:0.2px #444853;">https://kubeconfig-example-a...</div>
<div style="position:absolute;left:928.80px;top:1096.62px;font-size:14.49px;line-height:14.49px;color:#444853;white-space:nowrap;z-index:5;letter-spacing:0.055px;-webkit-text-stroke:0.2px #444853;">4.0.0-230720/20230720.0943</div>
<div style="position:absolute;left:1203.00px;top:573.13px;font-size:13.45px;line-height:13.45px;color:#7a7d87;white-space:nowrap;z-index:5;letter-spacing:-0.039px;">Cluster Profiles</div>
<div style="position:absolute;left:1243.00px;top:604.76px;font-size:9.5px;line-height:9.5px;color:#474b58;white-space:nowrap;z-index:5;font-weight:700;letter-spacing:0.258px;">ADDON PROFILE SPECTRO-PROXY</div>
<div style="position:absolute;left:1434.70px;top:605.16px;font-size:9.5px;line-height:9.5px;color:#2e3b44;white-space:nowrap;z-index:5;font-weight:700;letter-spacing:0.438px;">PROJ</div>
<div style="position:absolute;left:1242.70px;top:696.36px;font-size:9.5px;line-height:9.5px;color:#474b58;white-space:nowrap;z-index:5;font-weight:700;letter-spacing:0.230px;">INFRASTRUCTURE PROFILE SYSTEM-AWS-CLUSTER-PROFILE</div>
<div style="position:absolute;left:1563.80px;top:696.56px;font-size:9.5px;line-height:9.5px;color:#2e3140;white-space:nowrap;z-index:5;font-weight:700;letter-spacing:0.110px;">SYSTEM</div>
<div style="position:absolute;left:1282.60px;top:646.03px;font-size:13.45px;line-height:13.45px;color:#4a4e5a;white-space:nowrap;z-index:5;letter-spacing:-0.358px;">Spectro Proxy 1.4.0</div>
<div style="position:absolute;left:1282.60px;top:737.83px;font-size:13.45px;line-height:13.45px;color:#4a4e5a;white-space:nowrap;z-index:5;transform:scaleX(0.8666);transform-origin:0 0;">Amazon EBS CSI 1.10.0</div>
<div style="position:absolute;left:1282.60px;top:789.83px;font-size:13.45px;line-height:13.45px;color:#4a4e5a;white-space:nowrap;z-index:5;letter-spacing:-0.113px;">Calico 3.24.5</div>
<div style="position:absolute;left:1281.60px;top:842.13px;font-size:13.45px;line-height:13.45px;color:#4a4e5a;white-space:nowrap;z-index:5;letter-spacing:-0.152px;">Palette eXtended Kubernetes 1.24.10</div>
<div style="position:absolute;left:1281.60px;top:893.73px;font-size:13.45px;line-height:13.45px;color:#4a4e5a;white-space:nowrap;z-index:5;letter-spacing:-0.047px;">Ubuntu 20.04</div>
<div style="position:absolute;left:1625.00px;top:1146.42px;font-size:15.52px;line-height:15.52px;color:#ffffff;white-space:nowrap;z-index:10;letter-spacing:0.381px;-webkit-text-stroke:0.2px #ffffff;">Bug rep</div>
<div style="position:absolute;left:1683.50px;top:1121.80px;font-size:26px;line-height:26px;color:#ffffff;white-space:nowrap;z-index:12;font-weight:700;">?</div>
</body></html>
